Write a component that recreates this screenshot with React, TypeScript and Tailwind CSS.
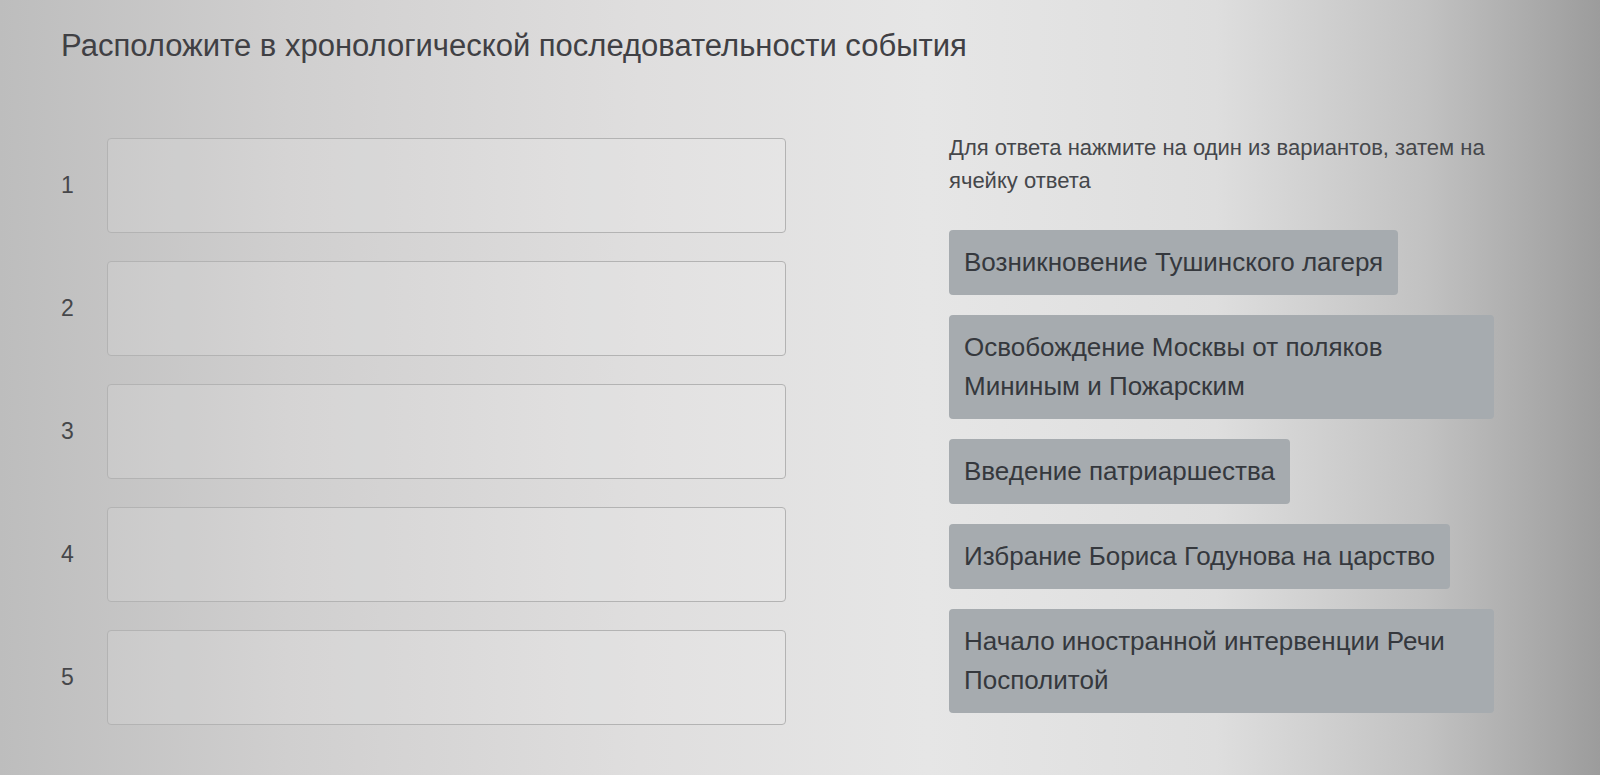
import React from 'react';

const slots = [1, 2, 3, 4, 5];

const options = [
  'Возникновение Тушинского лагеря',
  'Освобождение Москвы от поляков Мининым и Пожарским',
  'Введение патриаршества',
  'Избрание Бориса Годунова на царство',
  'Начало иностранной интервенции Речи Посполитой',
];

export default function App() {
  return (
    <div
      className="w-[1600px] h-[775px] overflow-hidden text-[#3b3d41] bg-[linear-gradient(90deg,#bdbdbd_0%,#d0cfcf_18%,#dfdede_40%,#e6e6e6_58%,#dedede_76%,#c2c2c2_89%,#9c9c9c_100%)]"
      style={{ fontFamily: '"Liberation Sans", Arial, sans-serif' }}
    >
      {/* Title */}
      <h1 className="pl-[61px] pt-[26px] text-[31px] leading-[40px] text-[#404044]">
        Расположите в хронологической последовательности события
      </h1>

      <div className="flex items-start pl-[61px] mt-[65px]">
        {/* Answer slots */}
        <div className="pt-[7px] flex flex-col gap-[28px]">
          {slots.map((n) => (
            <div key={n} className="flex items-center">
              <span className="w-[46px] text-[23px] text-[#46474a]">{n}</span>
              <div className="w-[679px] h-[95px] rounded-[4px] border border-[#b3b3b3] bg-white/10" />
            </div>
          ))}
        </div>

        {/* Options */}
        <div className="ml-[163px] w-[560px] flex flex-col items-start">
          <p className="text-[22px] leading-[33px] text-[#45474b] w-[550px]">
            Для ответа нажмите на один из вариантов, затем на ячейку ответа
          </p>
          <div className="mt-[33px] flex flex-col items-start gap-[20px]">
            {options.map((o) => (
              <div
                key={o}
                className="max-w-[545px] px-[15px] py-[13px] rounded-[4px] bg-[#a6abaf] text-[26px] leading-[39px] text-[#35383d]"
              >
                {o}
              </div>
            ))}
          </div>
        </div>
      </div>
    </div>
  );
}
